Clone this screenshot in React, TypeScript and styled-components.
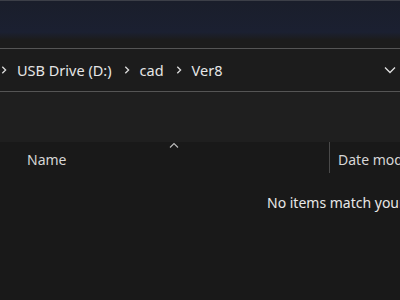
import React from "react";
import styled, { createGlobalStyle } from "styled-components";

const Global = createGlobalStyle`
  html, body { margin: 0; padding: 0; background: #191919; }
  body { width: 400px; height: 300px; overflow: hidden; font-family: "Noto Sans", "Open Sans", sans-serif; }
`;

const Window = styled.div`
  width: 400px;
  height: 300px;
  display: flex;
  flex-direction: column;
  background: #191919;
  overflow: hidden;
`;

const TitleBar = styled.div`
  height: 40px;
  flex: none;
  border-top: 1px solid #3c3f48;
  box-sizing: border-box;
  background: linear-gradient(180deg, #1a1e2b 0%, #1b2031 80%, #1c1c1c 100%);
`;

const Spacer = styled.div`
  height: 8px;
  flex: none;
  background: #1c1c1c;
`;

const AddressBar = styled.div`
  height: 44px;
  flex: none;
  box-sizing: border-box;
  border-top: 1px solid #555555;
  border-bottom: 1px solid #555555;
  background: #1c1c1c;
  display: flex;
  align-items: center;
  color: #e6e6e6;
  font-size: 14.5px;
`;

const Crumbs = styled.div`
  flex: 1;
  display: flex;
  align-items: center;
  margin-left: -11px;
`;

const Sep = styled.svg`
  width: 10px;
  height: 10px;
  margin: 0 8px 0 10px;
  flex: none;
`;

const Crumb = styled.span`
  white-space: nowrap;
`;

const Chevron = styled.svg`
  width: 14px;
  height: 14px;
  margin-right: 3px;
  flex: none;
`;

const Toolbar = styled.div`
  height: 50px;
  flex: none;
  background: #1f1f1f;
`;

const Header = styled.div`
  position: relative;
  height: 33px;
  flex: none;
  display: flex;
  align-items: center;
  color: #d6d6d6;
  font-size: 14px;
  background: #191919;
`;

const Col = styled.div<{ $w?: number }>`
  ${(p) => (p.$w ? `width: ${p.$w}px; flex: none;` : "flex: 1; min-width: 0; overflow: hidden;")}
  padding-left: ${(p) => (p.$w ? 27 : 8)}px;
  box-sizing: border-box;
  white-space: nowrap;
  padding-top: 2px;
`;

const Divider = styled.div`
  width: 1px;
  align-self: stretch;
  background: #4a4a4a;
  margin-bottom: 2px;
  flex: none;
`;

const SortCaret = styled.svg`
  position: absolute;
  left: 169px;
  top: 0px;
  width: 10px;
  height: 7px;
`;

const Empty = styled.div`
  padding-left: 267px;
  margin-top: 18px;
  color: #e8e8e8;
  font-size: 14px;
  white-space: nowrap;
  overflow: hidden;
`;

const ChevronRight = () => (
  <Sep viewBox="0 0 10 10">
    <path d="M3.3 1.8 L6.6 5 L3.3 8.2" fill="none" stroke="#dcdcdc" strokeWidth="1.3" />
  </Sep>
);

export default function App() {
  return (
    <>
      <Global />
      <Window>
        <TitleBar />
        <Spacer />
        <AddressBar>
          <Crumbs>
            <ChevronRight />
            <Crumb>USB Drive (D:)</Crumb>
            <ChevronRight />
            <Crumb>cad</Crumb>
            <ChevronRight />
            <Crumb>Ver8</Crumb>
          </Crumbs>
          <Chevron viewBox="0 0 14 14">
            <path d="M2 4.5 L7 9.5 L12 4.5" fill="none" stroke="#e0e0e0" strokeWidth="1.3" />
          </Chevron>
        </AddressBar>
        <Toolbar />
        <Header>
          <SortCaret viewBox="0 0 10 7">
            <path d="M1 5.5 L5 1.5 L9 5.5" fill="none" stroke="#bdbdbd" strokeWidth="1.1" />
          </SortCaret>
          <Col $w={329}>Name</Col>
          <Divider />
          <Col>Date modified</Col>
        </Header>
        <Empty>No items match your search.</Empty>
      </Window>
    </>
  );
}
